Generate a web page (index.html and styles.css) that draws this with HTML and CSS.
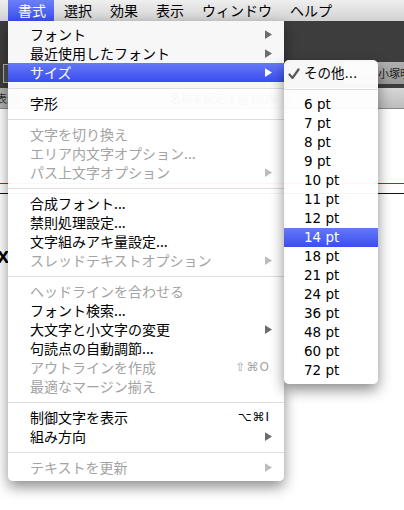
FILE: index.html
```html
<!DOCTYPE html>
<html lang="ja">
<head>
<meta charset="utf-8">
<link rel="stylesheet" href="styles.css">
</head>
<body>
<div class="screen">
  <div class="menubar">
    <span class="mb-item active">書式</span>
    <span class="mb-item">選択</span>
    <span class="mb-item">効果</span>
    <span class="mb-item">表示</span>
    <span class="mb-item">ウィンドウ</span>
    <span class="mb-item">ヘルプ</span>
  </div>
  <div class="app">
    <div class="dark-band"></div>
    <div class="control-row">
      <div class="field-left"></div>
      <div class="field-right">小塚明朝 Pro R</div>
    </div>
    <div class="gap-row"></div>
    <div class="tab-row">
      <span class="tab first">表示</span>
      <span class="tab second">名称未設定-1 @ 100%</span>
    </div>
    <div class="canvas">
      <div class="guide red"></div>
      <div class="guide black"></div>
      <div class="glyph">x</div>
    </div>
  </div>

  <div class="menu main">
    <div class="row"><span class="label">フォント</span><svg class="arrow" viewBox="0 0 8 10"><polygon points="0,0 8,5 0,10"/></svg></div>
    <div class="row"><span class="label">最近使用したフォント</span><svg class="arrow" viewBox="0 0 8 10"><polygon points="0,0 8,5 0,10"/></svg></div>
    <div class="row hl"><span class="label">サイズ</span><svg class="arrow" viewBox="0 0 8 10"><polygon points="0,0 8,5 0,10"/></svg></div>
    <div class="sep"></div>
    <div class="row"><span class="label">字形</span></div>
    <div class="sep"></div>
    <div class="row dis"><span class="label">文字を切り換え</span></div>
    <div class="row dis"><span class="label">エリア内文字オプション...</span></div>
    <div class="row dis"><span class="label">パス上文字オプション</span><svg class="arrow" viewBox="0 0 8 10"><polygon points="0,0 8,5 0,10"/></svg></div>
    <div class="sep"></div>
    <div class="row"><span class="label">合成フォント...</span></div>
    <div class="row"><span class="label">禁則処理設定...</span></div>
    <div class="row"><span class="label">文字組みアキ量設定...</span></div>
    <div class="row dis"><span class="label">スレッドテキストオプション</span><svg class="arrow" viewBox="0 0 8 10"><polygon points="0,0 8,5 0,10"/></svg></div>
    <div class="sep"></div>
    <div class="row dis"><span class="label">ヘッドラインを合わせる</span></div>
    <div class="row"><span class="label">フォント検索...</span></div>
    <div class="row"><span class="label">大文字と小文字の変更</span><svg class="arrow" viewBox="0 0 8 10"><polygon points="0,0 8,5 0,10"/></svg></div>
    <div class="row"><span class="label">句読点の自動調節...</span></div>
    <div class="row dis"><span class="label">アウトラインを作成</span><span class="sc">⇧⌘O</span></div>
    <div class="row dis"><span class="label">最適なマージン揃え</span></div>
    <div class="sep"></div>
    <div class="row"><span class="label">制御文字を表示</span><span class="sc">⌥⌘I</span></div>
    <div class="row"><span class="label">組み方向</span><svg class="arrow" viewBox="0 0 8 10"><polygon points="0,0 8,5 0,10"/></svg></div>
    <div class="sep"></div>
    <div class="row dis"><span class="label">テキストを更新</span><svg class="arrow" viewBox="0 0 8 10"><polygon points="0,0 8,5 0,10"/></svg></div>
  </div>

  <div class="menu sub">
    <div class="row"><span class="check"><svg viewBox="0 0 12 12"><path d="M1.5 6.5 L4.5 10 L10.5 1.5"/></svg></span><span class="label">その他...</span></div>
    <div class="sep"></div>
    <div class="row"><span class="check"></span><span class="label">6 pt</span></div>
    <div class="row"><span class="check"></span><span class="label">7 pt</span></div>
    <div class="row"><span class="check"></span><span class="label">8 pt</span></div>
    <div class="row"><span class="check"></span><span class="label">9 pt</span></div>
    <div class="row"><span class="check"></span><span class="label">10 pt</span></div>
    <div class="row"><span class="check"></span><span class="label">11 pt</span></div>
    <div class="row"><span class="check"></span><span class="label">12 pt</span></div>
    <div class="row hl"><span class="check"></span><span class="label">14 pt</span></div>
    <div class="row"><span class="check"></span><span class="label">18 pt</span></div>
    <div class="row"><span class="check"></span><span class="label">21 pt</span></div>
    <div class="row"><span class="check"></span><span class="label">24 pt</span></div>
    <div class="row"><span class="check"></span><span class="label">36 pt</span></div>
    <div class="row"><span class="check"></span><span class="label">48 pt</span></div>
    <div class="row"><span class="check"></span><span class="label">60 pt</span></div>
    <div class="row"><span class="check"></span><span class="label">72 pt</span></div>
  </div>
</div>
</body>
</html>
```

FILE: styles.css
```css
html, body {
  margin: 0;
  padding: 0;
  background: #ffffff;
}

body {
  font-family: "Noto Sans CJK JP", "DejaVu Sans", sans-serif;
  color: #000;
}

.screen {
  position: relative;
  width: 404px;
  height: 510px;
  overflow: hidden;
  background: #ffffff;
}

/* ---------- menu bar ---------- */
.menubar {
  display: flex;
  height: 21px;
  padding-left: 8px;
  background: linear-gradient(#efefef, #d2d2d2);
  font-size: 14px;
  line-height: 21px;
}

.mb-item {
  padding: 0 8px 0 10px;
  color: #000;
  white-space: nowrap;
}

.mb-item.active {
  background: linear-gradient(#6b80f7, #3a4ef1);
  color: #fff;
}

/* ---------- application background ---------- */
.dark-band {
  height: 40px;
  background: #3d3d3d;
}

.control-row {
  display: flex;
  align-items: center;
  height: 24px;
  background: #3d3d3d;
}

.field-left {
  width: 40px;
  height: 17px;
  margin-left: 3px;
  border: 1px solid #b4b4b4;
  background: #505050;
}

.field-right {
  margin-left: auto;
  width: 26px;
  height: 22px;
  padding-left: 34px;
  background: linear-gradient(#b0b0b0, #999999);
  color: #1e1e1e;
  font-size: 11px;
  line-height: 22px;
  white-space: nowrap;
  overflow: hidden;
}

.gap-row {
  height: 3px;
  background: #3d3d3d;
}

.tab-row {
  display: flex;
  align-items: center;
  height: 20px;
  background: linear-gradient(#d6d6d6, #bdbdbd);
  border-bottom: 1px solid #8a8a8a;
  font-size: 11px;
  line-height: 20px;
  color: #333;
  white-space: nowrap;
  overflow: hidden;
}

.tab.first {
  margin-left: -4px;
  padding-right: 1px;
  border-right: 1px solid #888;
  background: #b3b3b3;
}

.tab.second {
  margin-left: 150px;
}

.canvas {
  height: 300px;
  background: #ffffff;
}

.guide {
  height: 1px;
}

.guide.red {
  margin-top: 74px;
  background: #d4161b;
}

.guide.black {
  margin-top: 9px;
  background: #111;
}

.glyph {
  margin-top: 51px;
  margin-left: -3px;
  font-family: "Liberation Sans", sans-serif;
  font-weight: bold;
  font-size: 22px;
  line-height: 22px;
  color: #000;
}

/* ---------- menus ---------- */
.menu {
  position: absolute;
  padding: 4px 0;
  background: rgba(255, 255, 255, 0.96);
  box-shadow: 0 6px 14px rgba(0, 0, 0, 0.45);
  font-size: 14px;
}

.menu.main {
  left: 8px;
  top: 21px;
  width: 276px;
  border-radius: 0 0 5px 5px;
}

.menu.sub {
  left: 284px;
  top: 60px;
  width: 94px;
  border-radius: 5px;
}

.row {
  display: flex;
  align-items: center;
  height: 19px;
  padding: 0 12px 0 22px;
  line-height: 19px;
  white-space: nowrap;
  color: #000;
}

.row .label {
  flex: 1;
}

.row.dis {
  color: #a3a3a3;
}

.row.hl {
  background: linear-gradient(#6479f6, #3a4df1);
  color: #fff;
}

.arrow {
  width: 7px;
  height: 9px;
  fill: #6c6c6c;
}

.row.dis .arrow {
  fill: #bdbdbd;
}

.row.hl .arrow {
  fill: #ffffff;
}

.sc {
  font-family: "DejaVu Sans", sans-serif;
  font-size: 12px;
  letter-spacing: 1px;
  padding-right: 2px;
}

.sep {
  display: flex;
  align-items: center;
  height: 12px;
}

.sep::after {
  content: "";
  flex: 1;
  height: 1px;
  background: #dedede;
}

.sub .row {
  padding: 0 4px;
}

.sub .row .label {
  font-family: "DejaVu Sans", "Noto Sans CJK JP", sans-serif;
  font-size: 13.5px;
}

.check {
  display: flex;
  align-items: center;
  width: 16px;
  height: 19px;
}

.check svg {
  width: 12px;
  height: 12px;
  fill: none;
  stroke: #5a5a5a;
  stroke-width: 2.2;
  stroke-linecap: round;
  stroke-linejoin: round;
}
```
